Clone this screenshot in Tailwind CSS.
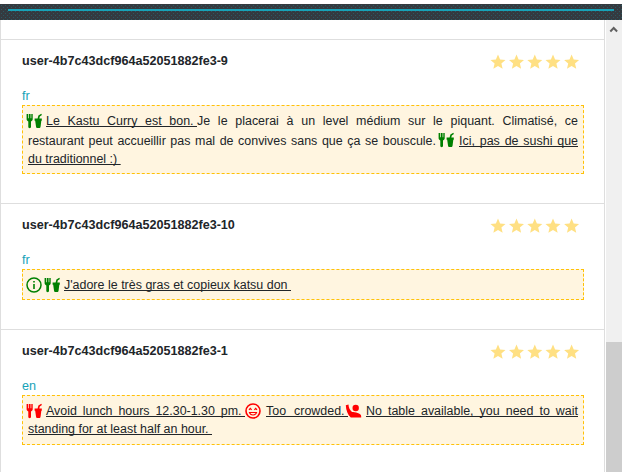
<!DOCTYPE html>
<html lang="fr">
<head>
<meta charset="utf-8">
<title>Reviews</title>
<script src="https://cdn.jsdelivr.net/npm/@tailwindcss/browser@4"></script>
</head>
<body class="w-[622px] h-[472px] overflow-hidden bg-white font-['Liberation_Sans',Arial,sans-serif] text-[12.6px] text-[#212529]">
<svg class="absolute w-0 h-0">
  <defs><pattern id="dots" width="4" height="4" patternUnits="userSpaceOnUse"><path d="M1 1h1v1H1zM3 3h1v1H3z" fill="#2c5860"/></pattern></defs>
  <symbol id="star" viewBox="0 0 24 24"><path d="M12 17.27L18.18 21l-1.64-7.03L22 9.24l-7.19-.61L12 2 9.19 8.63 2 9.24l5.46 4.73L5.82 21z"/></symbol>
  <symbol id="stars" viewBox="0 0 92 18">
    <use href="#star" width="18" height="18"/><use href="#star" x="18.5" width="18" height="18"/><use href="#star" x="36.8" width="18" height="18"/><use href="#star" x="55" width="18" height="18"/><use href="#star" x="73.6" width="18" height="18"/>
  </symbol>
  <symbol id="food" viewBox="0 0 17 16">
    <path d="M.6 1v5c0 1.400.8 2.100 1.700 2.400V14c0 1.500 2.700 1.500 2.700 0V8.400C6 8.100 6.700 7.400 6.700 6V1H5.300v4.200h-.7V1H2.800v4.200h-.7V1z"/>
    <path d="M8.600 5.500h3l.8-3L15.300.8l.6 1.200-2.100 1.400-.5 2.100h2.500v2.300h-.5l-.7 5.700c-.2 1-.6 1.500-1.400 1.500h-1.800c-.8 0-1.200-.5-1.400-1.500l-.8-5.700h-.6z"/>
  </symbol>
  <symbol id="info" viewBox="0 0 16 16"><circle cx="8" cy="8" r="7" fill="none" stroke="currentColor" stroke-width="1.500"/><path d="M7.200 4h1.600v1.600H7.200zM7.200 7h1.600v5H7.200z"/></symbol>
  <symbol id="smile" viewBox="0 0 16 16"><g fill="none" stroke="currentColor"><circle cx="8" cy="8" r="7" stroke-width="1.600"/><path d="M4 6.800l1.300-1.500 1.300 1.500M9.400 6.800l1.300-1.500L12 6.800" stroke-width="1.200"/></g><path d="M3.700 9h8.600c-.5 2.300-2.200 3.600-4.300 3.600S4.200 11.300 3.700 9z"/><path d="M5.300 10h5.400c-.5.900-1.400 1.400-2.700 1.400S5.800 10.900 5.300 10z" fill="#fff5e0"/></symbol>
  <symbol id="person" viewBox="0 0 17 14"><circle cx="10.700" cy="4" r="3.200"/><path d="M.8 1.300L3.500.5c.1 2.700 1 5.400 3.500 7.600 2.800.2 9.200.8 9.200 4.200v1.200H5.800C2.800 10.800 1 6.500.8 1.300z"/></symbol>
</svg>

<div class="h-1"></div>
<header class="relative h-4 px-2 pt-[5px] bg-[#343a40]">
  <svg class="absolute inset-0 w-full h-full"><rect width="100%" height="100%" fill="url(#dots)"/></svg>
  <div class="relative h-[2px] bg-[#17a2b8]"></div>
</header>

<div class="flex h-[452px]">
  <main class="w-[605px] shrink-0 border-x border-[#dedede] pt-[19px] overflow-hidden">
    <article class="h-[164px] border-t border-[#dedede] pl-[21px] pr-5">
      <div class="flex justify-between pt-[13px] h-[47px]">
        <h2 class="w-[206px] whitespace-nowrap font-bold leading-[17px]">user-4b7c43dcf964a52051882fe3-9</h2>
        <svg class="w-[92px] h-[18px] mr-[3px] fill-[#ffe083]"><use href="#stars"/></svg>
      </div>
      <div class="h-[18px] leading-[18px] text-[#17a2b8]">fr</div>
      <div class="h-[69px] pl-[5px] pt-[6px] border border-dashed border-[#ffc107] bg-[#fff5e0] text-[12.45px] leading-[18px] whitespace-nowrap underline-offset-[1px] [text-decoration-skip-ink:none]">
        <div class="flex h-5 -ml-[2px]">
          <svg class="w-[17px] h-4 mt-[1px] mr-[3px] fill-[#008000]"><use href="#food"/></svg>
          <span class="w-[151px] underline [text-align-last:justify]">Le Kastu Curry est bon.&nbsp;</span>
          <span class="w-[381px] [text-align-last:justify]">Je le placerai à un level médium sur le piquant. Climatisé, ce</span>
        </div>
        <div class="flex h-[18px]">
          <span class="w-[408px] [text-align-last:justify]">restaurant peut accueillir pas mal de convives sans que ça se bouscule.</span>
          <svg class="w-[17px] h-4 ml-[2px] mr-1 fill-[#008000]"><use href="#food"/></svg>
          <span class="w-[119px] underline [text-align-last:justify]">Ici, pas de sushi que</span>
        </div>
        <div class="w-[92px] underline [text-align-last:justify]">du traditionnel :)&nbsp;</div>
      </div>
    </article>

    <article class="h-[126px] border-t border-[#dedede] pl-[21px] pr-5">
      <div class="flex justify-between pt-[13px] h-[47px]">
        <h2 class="w-[213px] whitespace-nowrap font-bold leading-[17px]">user-4b7c43dcf964a52051882fe3-10</h2>
        <svg class="w-[92px] h-[18px] mr-[3px] fill-[#ffe083]"><use href="#stars"/></svg>
      </div>
      <div class="h-[18px] leading-[18px] text-[#17a2b8]">fr</div>
      <div class="h-[31px] pl-[3px] pt-[6px] border border-dashed border-[#ffc107] bg-[#fff5e0] text-[12.45px] leading-[18px] whitespace-nowrap underline-offset-[1px] [text-decoration-skip-ink:none]">
        <div class="flex">
          <svg class="w-4 h-4 mt-[1px] mr-[1px] text-[#008000] fill-current"><use href="#info"/></svg>
          <svg class="w-[17px] h-4 mt-[1px] ml-[1px] mr-[3px] fill-[#008000]"><use href="#food"/></svg>
          <span class="w-[227px] underline [text-align-last:justify]">J'adore le très gras et copieux katsu don&nbsp;</span>
        </div>
      </div>
    </article>

    <article class="h-[143px] border-t border-[#dedede] pl-[21px] pr-5">
      <div class="flex justify-between pt-[13px] h-[47px]">
        <h2 class="w-[206px] whitespace-nowrap font-bold leading-[17px]">user-4b7c43dcf964a52051882fe3-1</h2>
        <svg class="w-[92px] h-[18px] mr-[3px] fill-[#ffe083]"><use href="#stars"/></svg>
      </div>
      <div class="h-[18px] leading-[18px] text-[#17a2b8]">en</div>
      <div class="h-[50px] pl-[5px] pt-[6px] border border-dashed border-[#ffc107] bg-[#fff5e0] text-[12.45px] leading-[18px] whitespace-nowrap underline-offset-[1px] [text-decoration-skip-ink:none]">
        <div class="flex h-[18px] -ml-[2px]">
          <svg class="w-[17px] h-4 mt-[1px] mr-[3px] fill-[#ff0000]"><use href="#food"/></svg>
          <span class="w-[199px] underline [text-align-last:justify]">Avoid lunch hours 12.30-1.30 pm.&nbsp;</span>
          <svg class="w-4 h-4 mt-[1px] mr-[5px] text-[#ff0000] fill-current"><use href="#smile"/></svg>
          <span class="w-[82px] underline [text-align-last:justify]">Too crowded.&nbsp;</span>
          <svg class="w-[17px] h-[14px] mt-[2px] -ml-[3px] mr-1 fill-[#ff0000]"><use href="#person"/></svg>
          <span class="w-[212px] underline [text-align-last:justify]">No table available, you need to wait</span>
        </div>
        <div class="w-[184px] underline [text-align-last:justify]">standing for at least half an hour.&nbsp;</div>
      </div>
    </article>
  </main>
  <aside class="ml-[1px] w-4 bg-[#f0f0f0] flex flex-col">
    <svg class="w-4 h-[322px]" viewBox="0 0 16 322"><path d="M4.300 11.500L7.700 8l3.400 3.500" fill="none" stroke="#606060" stroke-width="2"/></svg>
    <div class="flex-1 bg-[#cdcdcd]"></div>
  </aside>
</div>
</body>
</html>
